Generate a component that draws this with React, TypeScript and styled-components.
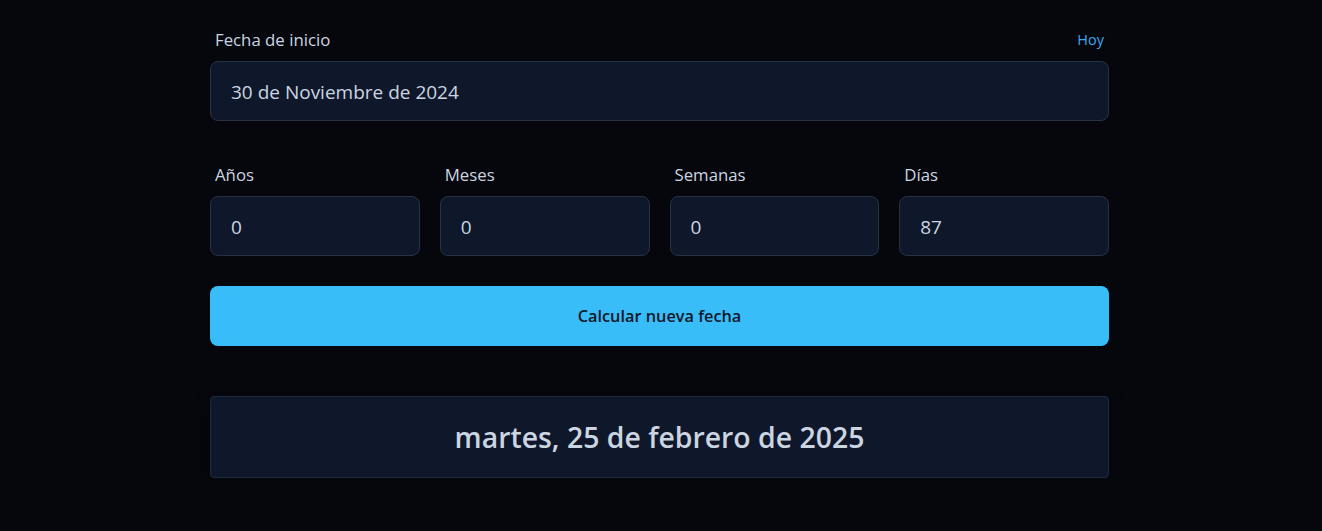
import styled, { createGlobalStyle } from "styled-components";

const GlobalStyle = createGlobalStyle`
  body {
    margin: 0;
    background: #05070d;
    font-family: "Open Sans", "Noto Sans", sans-serif;
  }
`;

const Page = styled.div`
  width: 899px;
  margin: 0 auto;
  padding: 27px 3px 0 0;
  display: flex;
  flex-direction: column;
`;

const LabelRow = styled.div`
  display: flex;
  justify-content: space-between;
  align-items: center;
  height: 24px;
  margin-bottom: 10px;
  padding: 0 5px;
`;

const Label = styled.label`
  color: #cbd5e1;
  font-size: 16.8px;
`;

const TodayLink = styled.button`
  background: none;
  border: none;
  padding: 0;
  color: #38a8f0;
  font-size: 14.5px;
  font-family: inherit;
  cursor: pointer;
`;

const Input = styled.input`
  box-sizing: border-box;
  width: 100%;
  height: 60px;
  padding: 2px 20px 0;
  background: #0f172a;
  border: 1px solid #283244;
  border-radius: 8px;
  color: #cbd5e1;
  font-size: 19px;
  font-family: inherit;
  outline: none;
`;

const Grid = styled.div`
  display: grid;
  grid-template-columns: repeat(4, 1fr);
  gap: 20px;
  margin-top: 41px;
`;

const Field = styled.div`
  display: flex;
  flex-direction: column;
`;

const Button = styled.button`
  margin-top: 30px;
  height: 60px;
  border: none;
  border-radius: 8px;
  background: #38bdf8;
  color: #0f172a;
  font-size: 16.3px;
  font-weight: 600;
  font-family: inherit;
  cursor: pointer;
`;

const Result = styled.div`
  margin-top: 50px;
  height: 82px;
  box-sizing: border-box;
  display: flex;
  align-items: center;
  justify-content: center;
  background: #0f172a;
  border: 1px solid #1f2a3b;
  border-radius: 4px;
  box-shadow: 0 4px 16px rgba(0, 0, 0, 0.4);
  color: #cbd5e1;
  font-size: 28.4px;
  font-weight: 600;
`;

const fields = [
  { label: "Años", value: "0" },
  { label: "Meses", value: "0" },
  { label: "Semanas", value: "0" },
  { label: "Días", value: "87" },
];

function App() {
  return (
    <>
      <GlobalStyle />
      <Page>
        <LabelRow>
          <Label>Fecha de inicio</Label>
          <TodayLink>Hoy</TodayLink>
        </LabelRow>
        <Input readOnly value="30 de Noviembre de 2024" />
        <Grid>
          {fields.map((f) => (
            <Field key={f.label}>
              <LabelRow>
                <Label>{f.label}</Label>
              </LabelRow>
              <Input readOnly value={f.value} />
            </Field>
          ))}
        </Grid>
        <Button>Calcular nueva fecha</Button>
        <Result>martes, 25 de febrero de 2025</Result>
      </Page>
    </>
  );
}

export default App;
